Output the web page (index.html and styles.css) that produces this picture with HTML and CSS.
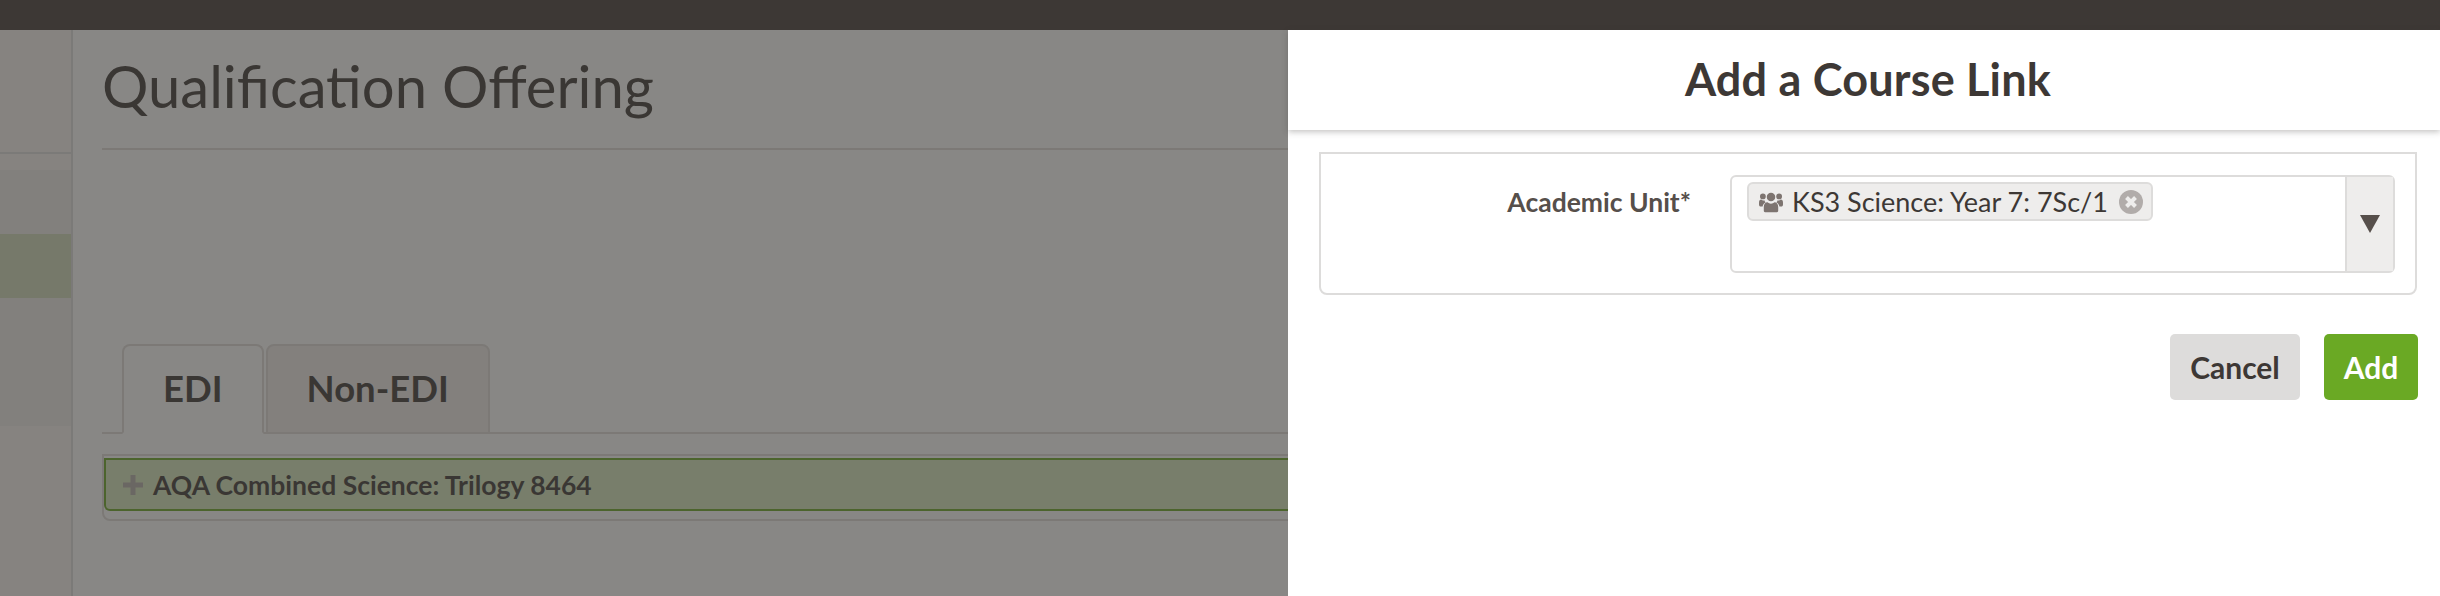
FILE: index.html
```html
<!DOCTYPE html>
<html>

<head>
    <title>Qualification Offering</title>
    <meta charset="utf-8" />
    <link rel="stylesheet" href="styles.css">
</head>

<body>
    <div class="topbar"></div>
    <div class="page">
        <div class="sidebar">
            <div class="side-top"></div>
            <div class="side-gap"></div>
            <div class="side-item"></div>
            <div class="side-item side-active"></div>
            <div class="side-rest"></div>
        </div>
        <div class="content">
            <h1 class="page-title">Qualification Offering</h1>
            <div class="tabs">
                <div class="tab tab-current">EDI</div>
                <div class="tab">Non-EDI</div>
            </div>
            <div class="accordion">
                <div class="accordion-head">
                    <svg class="plus" viewBox="0 0 20 20"><path d="M7.500 0h5v7.500H20v5h-7.500V20h-5v-7.500H0v-5h7.500z" /></svg>
                    <span>AQA Combined Science: Trilogy 8464</span>
                </div>
            </div>
        </div>
    </div>
    <div class="backdrop"></div>
    <div class="drawer">
        <div class="drawer-head">Add a Course Link</div>
        <div class="drawer-body">
            <div class="field-box">
                <label class="field-label">Academic Unit*</label>
                <div class="select">
                    <div class="select-values">
                        <span class="chip">
                            <svg class="chip-icon" viewBox="0 0 26 22">
                                <circle cx="13" cy="5.600" r="4.600" />
                                <circle cx="4.200" cy="5" r="3.100" />
                                <circle cx="21.800" cy="5" r="3.100" />
                                <path d="M6.600 22c-.9 0-1.400-.6-1.400-1.500v-4c0-3 1.700-5.100 4-5.100 1 1 2.300 1.500 3.800 1.500s2.800-.5 3.800-1.500c2.300 0 4 2.100 4 5.100v4c0 .9-.5 1.500-1.400 1.500z" />
                                <path d="M0 13.500v-1.800c0-2 1-3.300 2.400-3.300.7.700 1.500 1 2.300 1 .4 0 .8-.1 1.100-.2.200 1 .8 1.800 1.400 2.300-1.700.7-3 2.200-3.300 4.400H1.300C.5 15.900 0 14.900 0 13.500zM26 13.500v-1.800c0-2-1-3.300-2.400-3.300-.7.700-1.500 1-2.300 1-.4 0-.8-.1-1.100-.2-.2 1-.8 1.800-1.400 2.300 1.700.7 3 2.200 3.300 4.400h2.600c.8 0 1.300-1 1.300-2.400z" />
                            </svg>
                            <span>KS3 Science: Year 7: 7Sc/1</span>
                            <svg class="chip-remove" viewBox="0 0 24 24">
                                <circle cx="12" cy="12" r="12" />
                                <path class="chip-x" d="M7.500 7.500l9 9M16.500 7.500l-9 9" />
                            </svg>
                        </span>
                    </div>
                    <div class="select-arrow">
                        <svg viewBox="0 0 20 18"><path d="M0 0h20L10 18z" /></svg>
                    </div>
                </div>
            </div>
            <div class="actions">
                <button class="btn btn-cancel">Cancel</button>
                <button class="btn btn-add">Add</button>
            </div>
        </div>
    </div>
</body>

</html>
```
FILE: styles.css
```css
html,
body {
    margin: 0;
    height: 596px;
    overflow: hidden;
    background: #fff;
    color: #3d3835;
    font-family: "Lato", "Liberation Sans", sans-serif;
}

.topbar {
    height: 30px;
    background: #3d3835;
}

.page {
    display: flex;
    height: 566px;
}

.sidebar {
    width: 71px;
    flex: none;
    display: flex;
    flex-direction: column;
    background: #f9f5f3;
    border-right: 2px solid #dfdede;
}

.side-top {
    height: 122px;
    border-bottom: 2px solid #dfdede;
}

.side-gap {
    height: 16px;
}

.side-item {
    height: 64px;
    background: #f1edea;
}

.side-active {
    background: #d1ddbc;
}

.side-rest {
    height: 128px;
    background: #f1edea;
}

.content {
    flex: 1;
    padding-left: 29px;
}

.page-title {
    margin: 0;
    height: 118px;
    line-height: 111px;
    font-size: 58px;
    font-weight: 400;
    border-bottom: 2px solid #e0dcda;
}

.tabs {
    display: flex;
    gap: 2px;
    margin-top: 194px;
    padding-left: 20px;
    height: 88px;
    border-bottom: 2px solid #e0dcda;
}

.tab {
    height: 86px;
    padding: 0 39px;
    line-height: 84px;
    font-size: 36.500px;
    font-weight: 700;
    background: #f2eeec;
    border: 2px solid #e0dcda;
    border-radius: 8px 8px 0 0;
}

.tab-current {
    background: #fff;
    border-bottom-color: #fff;
}

.accordion {
    margin-top: 20px;
    height: 61px;
    border: 2px solid #e0dcda;
    border-radius: 0 0 8px 8px;
    padding: 2px 0 0 0;
}

.accordion-head {
    height: 49px;
    display: flex;
    align-items: center;
    gap: 10px;
    padding-left: 17px;
    background: #d8e9be;
    border: 2px solid #6aa924;
    border-right: 0;
    border-radius: 0 0 0 6px;
    font-size: 26.500px;
    font-weight: 700;
}

.plus {
    width: 20px;
    height: 20px;
    fill: #b5aeaa;
}

.backdrop {
    position: absolute;
    left: 0;
    right: 0;
    top: 30px;
    bottom: 0;
    background: rgba(56, 55, 52, 0.6);
}

.drawer {
    position: absolute;
    top: 30px;
    bottom: 0;
    right: 0;
    width: 1152px;
    background: #fff;
}

.drawer-head {
    height: 100px;
    padding-left: 8px;
    line-height: 98px;
    text-align: center;
    font-size: 45px;
    font-weight: 700;
    letter-spacing: 0.2px;
    box-shadow: 0 2px 6px rgba(61, 56, 53, 0.3);
}

.drawer-body {
    padding: 22px 22px 0 31px;
}

.field-box {
    display: flex;
    height: 118px;
    margin-right: 1px;
    padding: 21px 20px 0 0;
    border: 2px solid #dddcdb;
    border-radius: 0 0 8px 8px;
}

.field-label {
    width: 370px;
    flex: none;
    text-align: right;
    padding-top: 11px;
    font-size: 26.500px;
    font-weight: 700;
    color: #564f4b;
}

.select {
    margin-left: 39px;
    flex: 1;
    display: flex;
    height: 94px;
    border: 2px solid #dddcdb;
    border-radius: 6px;
}

.select-values {
    flex: 1;
    padding: 5px 0 0 15px;
}

.chip {
    display: inline-flex;
    align-items: center;
    height: 35px;
    padding: 0 8px 0 10px;
    background: #eeedec;
    border: 2px solid #dddcdb;
    border-radius: 6px;
    font-size: 27px;
}

.chip-icon {
    width: 24px;
    height: 22px;
    margin-right: 9px;
    fill: #7d7470;
}

.chip-remove {
    width: 24px;
    height: 24px;
    margin-left: 11px;
    fill: #b1acaa;
}

.chip-x {
    fill: none;
    stroke: #eeedec;
    stroke-width: 4;
}

.select-arrow {
    width: 46px;
    flex: none;
    display: flex;
    align-items: center;
    justify-content: center;
    background: #eeedec;
    border-left: 2px solid #dddcdb;
}

.select-arrow svg {
    width: 20px;
    height: 18px;
    fill: #564f4b;
}

.actions {
    display: flex;
    justify-content: flex-end;
    gap: 24px;
    margin-top: 39px;
}

.btn {
    height: 66px;
    border: 0;
    border-radius: 5px;
    font-family: inherit;
    font-size: 30px;
    font-weight: 700;
}

.btn-cancel {
    width: 130px;
    background: #dddcdb;
    color: #3d3835;
}

.btn-add {
    width: 94px;
    background: #6aa924;
    color: #fff;
}
```
